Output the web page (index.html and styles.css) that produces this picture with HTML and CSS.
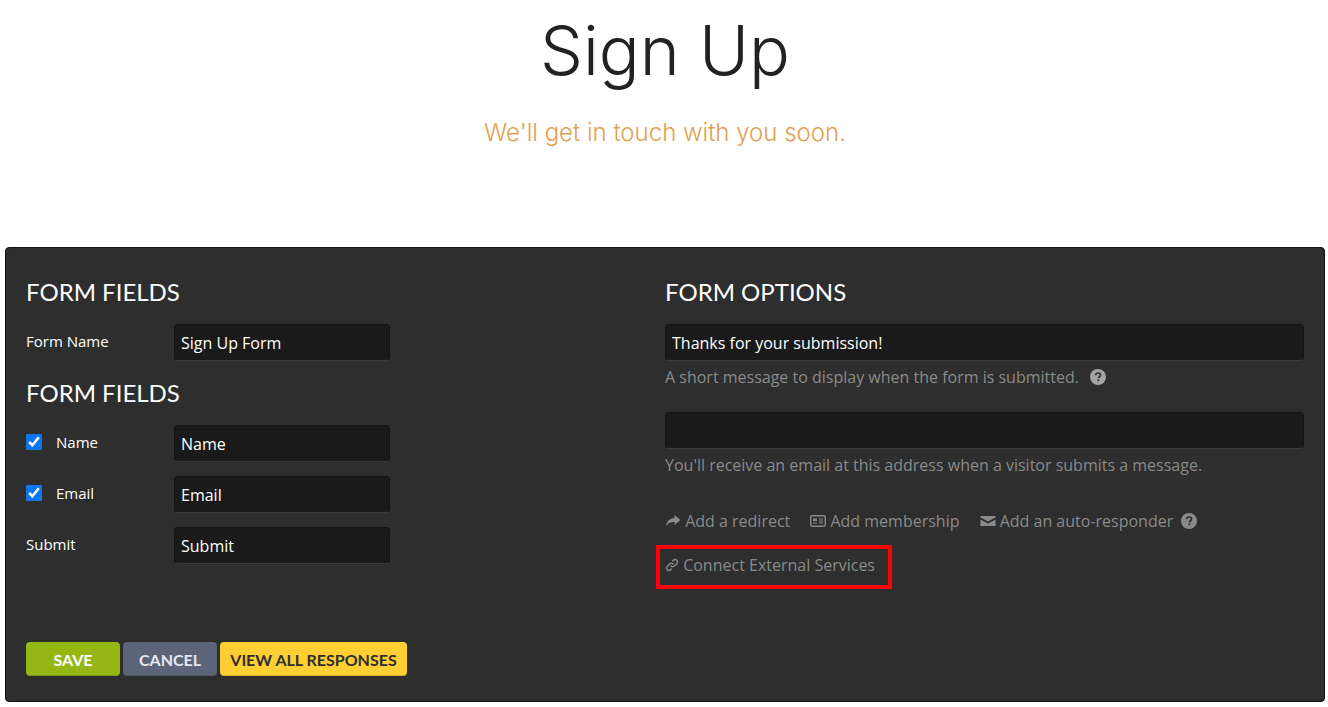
FILE: index.html
```html
<!DOCTYPE html>
<html lang="en">
<head>
    <meta charset="UTF-8">
    <meta name="viewport" content="width=device-width, initial-scale=1.0">
    <title>Sign Up</title>
    <link rel="stylesheet" href="styles.css">
</head>
<body>
    <header class="hero">
        <h1>Sign Up</h1>
        <p>We'll get in touch with you soon.</p>
    </header>

    <div class="panel">
        <div class="columns">
            <!-- Left column -->
            <div class="col">
                <h3 class="first">FORM FIELDS</h3>
                <div class="row">
                    <label class="row-label">Form Name</label>
                    <input class="field small" type="text" value="Sign Up Form">
                </div>
                <h3 class="second">FORM FIELDS</h3>
                <div class="row">
                    <label class="row-label"><input class="check" type="checkbox" checked>Name</label>
                    <input class="field small" type="text" value="Name">
                </div>
                <div class="row">
                    <label class="row-label"><input class="check" type="checkbox" checked>Email</label>
                    <input class="field small" type="text" value="Email">
                </div>
                <div class="row">
                    <label class="row-label">Submit</label>
                    <input class="field small" type="text" value="Submit">
                </div>
            </div>

            <!-- Right column -->
            <div class="col">
                <h3 class="first">FORM OPTIONS</h3>
                <input class="field wide" type="text" value="Thanks for your submission!">
                <p class="hint">A short message to display when the form is submitted.
                    <svg class="help" viewBox="0 0 16 16"><circle cx="8" cy="8" r="8" fill="#a5a5a5"/><path d="M5.6 6.2C5.7 4.8 6.7 4 8.1 4c1.4 0 2.4.8 2.4 2 0 1-.6 1.5-1.3 2-.5.3-.7.6-.7 1.2" fill="none" stroke="#2e2e2e" stroke-width="1.7"/><rect x="7.5" y="10.4" width="1.8" height="1.8" fill="#2e2e2e"/></svg>
                </p>
                <input class="field wide second-field" type="text">
                <p class="hint">You'll receive an email at this address when a visitor submits a message.</p>

                <div class="links">
                    <a class="link">
                        <svg class="icon" viewBox="0 0 16 14"><path d="M9.5 1 15.5 6 9.5 11V8C5.500 8 3 9 1 12.500 1.500 7.500 4.500 4.200 9.500 4Z" fill="#8a8a8a"/></svg>
                        Add a redirect
                    </a>
                    <a class="link">
                        <svg class="icon card" viewBox="0 0 16 14"><rect x=".7" y="1.700" width="14.600" height="10.600" rx="1.500" fill="none" stroke="#8a8a8a" stroke-width="1.400"/><rect x="3" y="4.500" width="4" height="2.500" fill="#8a8a8a"/><path d="M3 9h4M9 5h4M9 7h4M9 9h4" stroke="#8a8a8a" stroke-width="1.100"/></svg>
                        Add membership
                    </a>
                    <a class="link">
                        <svg class="icon mail" viewBox="0 0 16 12"><path d="M.5 1h15v1.600L8 6.600.5 2.600Z" fill="#8a8a8a"/><path d="M.5 4.500 8 8.500l7.500-4V11H.5Z" fill="#8a8a8a"/></svg>
                        Add an auto-responder
                        <svg class="help after" viewBox="0 0 16 16"><circle cx="8" cy="8" r="8" fill="#8a8a8a"/><path d="M5.600 6.200C5.700 4.800 6.700 4 8.100 4c1.400 0 2.400.8 2.400 2 0 1-.6 1.500-1.300 2-.5.3-.7.6-.7 1.200" fill="none" stroke="#2e2e2e" stroke-width="1.700"/><rect x="7.500" y="10.400" width="1.800" height="1.800" fill="#2e2e2e"/></svg>
                    </a>
                </div>
                <div class="connect-box">
                    <a class="link">
                        <svg class="icon chain" viewBox="0 0 16 16"><g fill="none" stroke="#8a8a8a" stroke-width="1.600" stroke-linecap="round"><path d="M6.800 9.200a2.700 2.700 0 0 0 3.800 0l3-3a2.700 2.700 0 0 0-3.800-3.800l-1 1"/><path d="M9.200 6.800a2.700 2.700 0 0 0-3.800 0l-3 3a2.700 2.700 0 0 0 3.800 3.800l1-1"/></g></svg>
                        Connect External Services
                    </a>
                </div>
            </div>
        </div>

        <div class="buttons">
            <button class="btn btn-save">SAVE</button>
            <button class="btn btn-cancel">CANCEL</button>
            <button class="btn btn-view">VIEW ALL RESPONSES</button>
        </div>
    </div>
</body>
</html>
```

FILE: styles.css
```css
html, body {
    overflow: hidden;
}
body {
    font-family: "Open Sans", Arial, sans-serif;
    margin: 0;
    padding: 0 3px 0 5px;
    background-color: #fff;
}
.hero {
    height: 247px;
    text-align: center;
    box-sizing: border-box;
    padding-top: 11px;
}
.hero h1 {
    margin: 0;
    font-family: Inter, Arial, sans-serif;
    font-weight: 300;
    font-size: 68px;
    line-height: 78px;
    color: #222;
}
.hero p {
    margin: 27px 0 0;
    font-family: Inter, Arial, sans-serif;
    font-weight: 300;
    font-size: 24px;
    line-height: 34px;
    color: #e2a04f;
}
.panel {
    height: 455px;
    box-sizing: border-box;
    background-color: #2e2e2e;
    border: 1px solid #111;
    border-radius: 4px;
    padding: 0 20px;
    display: flex;
    flex-direction: column;
}
.columns {
    display: grid;
    grid-template-columns: 639px 639px;
    flex: 1;
}
h3 {
    margin: 0;
    font-family: Lato, Arial, sans-serif;
    font-weight: 400;
    font-size: 24px;
    line-height: 30px;
    color: #fff;
}
h3.first {
    margin-top: 29px;
    margin-bottom: 17px;
}
h3.second {
    margin-top: 17px;
    margin-bottom: 17px;
}
.row {
    display: flex;
    align-items: center;
    height: 37px;
    margin-bottom: 14px;
}
.row-label {
    width: 148px;
    flex: none;
    color: #fff;
    font-size: 15px;
    display: flex;
    align-items: center;
    position: relative;
    top: -2px;
}
.check {
    width: 16px;
    height: 16px;
    margin: 0 14px 0 0;
    accent-color: #0b76ef;
}
.field {
    box-sizing: border-box;
    height: 37px;
    background-color: #1a1a1a;
    border: 1px solid #141414;
    border-bottom-color: #3a3a3a;
    border-radius: 4px;
    color: #fff;
    font-family: "Open Sans", Arial, sans-serif;
    font-size: 16px;
    padding: 0 6px;
    outline: none;
}
.field.small {
    width: 216px;
}
.field.wide {
    display: block;
    width: 639px;
}
.field.second-field {
    margin-top: 24px;
}
.hint {
    margin: 5px 0 0;
    font-size: 16px;
    line-height: 22px;
    color: #8a8a8a;
}
.help {
    width: 16px;
    height: 16px;
    margin-left: 7px;
    vertical-align: -2px;
}
.help.after {
    margin-left: 4px;
}
.links {
    display: flex;
    gap: 20px;
    margin-top: 34px;
}
.link {
    color: #8a8a8a;
    font-size: 16px;
    line-height: 22px;
    white-space: nowrap;
}
.icon {
    width: 16px;
    height: 14px;
    vertical-align: -1px;
}
.icon.chain {
    height: 14px;
    width: 14px;
}
.connect-box {
    width: 236px;
    height: 44px;
    box-sizing: border-box;
    border: 4px solid #f00;
    margin: 13px 0 0 -9px;
    padding: 5px 0 0 5px;
}
.buttons {
    display: flex;
    gap: 3px;
    padding-bottom: 25px;
}
.btn {
    height: 34px;
    border: none;
    border-radius: 4px;
    font-family: Lato, Arial, sans-serif;
    font-weight: 700;
    font-size: 16px;
    padding: 0;
    box-shadow: inset 0 -1px 0 rgba(0, 0, 0, 0.15);
}
.btn-save {
    width: 94px;
    background-color: #95b714;
    color: #fff;
}
.btn-cancel {
    width: 94px;
    background-color: #5b6478;
    color: #e4e8f0;
}
.btn-view {
    width: 187px;
    background-color: #ffcf33;
    color: #2e2e2e;
}
```
